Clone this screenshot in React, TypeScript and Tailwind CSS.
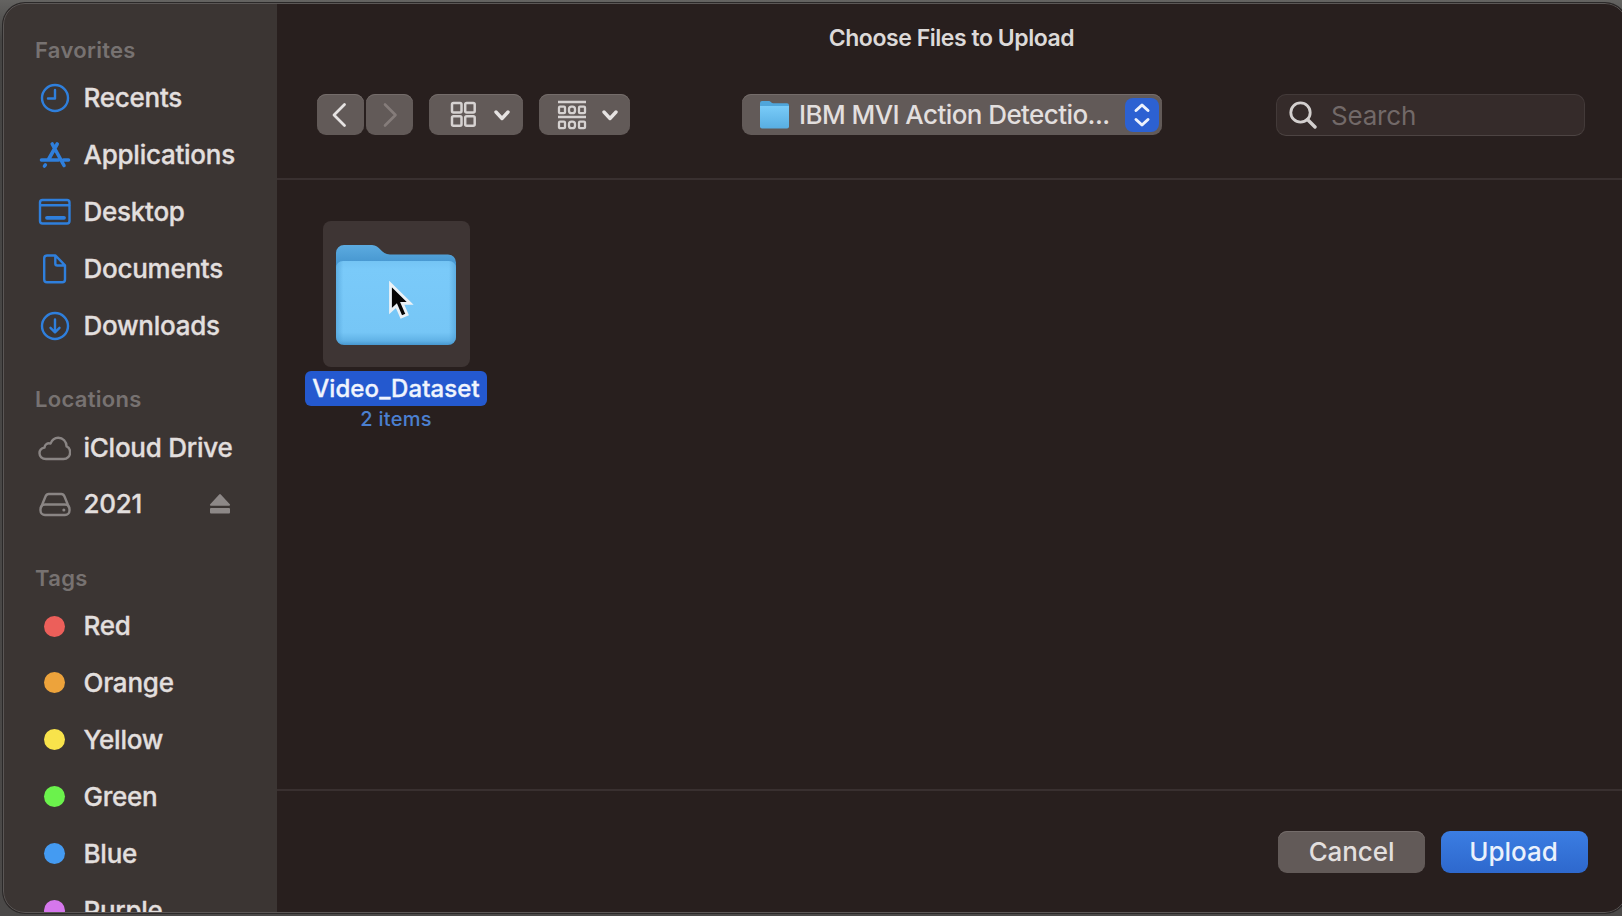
import React from "react";

const font = "font-['Inter',sans-serif]";

const rowText = "text-[26px] leading-none font-medium tracking-[-0.25px] text-[#e2dfde] [-webkit-text-stroke:0.35px_#e2dfde]";

function Section({ title, className = "", children }: { title: string; className?: string; children: React.ReactNode }) {
  return (
    <section className={className}>
      <h2 className="flex h-[39px] items-center pb-[1px] pl-[32px] text-[22px] leading-none font-semibold tracking-[0.3px] text-[#777271]">{title}</h2>
      <ul>{children}</ul>
    </section>
  );
}

function Row({ label, icon, trailing }: { label: string; icon: React.ReactNode; trailing?: React.ReactNode }) {
  return (
    <li className="flex h-[56.9px] items-center pl-[34px]">
      <span className="flex w-[34px] shrink-0 justify-center">{icon}</span>
      <span className={`ml-[12.5px] whitespace-nowrap ${rowText}`}>{label}</span>
      {trailing}
    </li>
  );
}

function SideIcon({ children, gray = false }: { children: React.ReactNode; gray?: boolean }) {
  return (
    <svg width="34" height="34" viewBox="0 0 34 34" fill="none" stroke={gray ? "#8a8584" : "#2f7fdc"} strokeWidth="2.4" strokeLinecap="round" strokeLinejoin="round">
      {children}
    </svg>
  );
}

function Dot({ color }: { color: string }) {
  return <span className={`h-[21px] w-[21px] rounded-full ${color}`} />;
}

function Chevron() {
  return (
    <svg width="16" height="11" viewBox="0 0 16 11" fill="none" stroke="#e6e3e2" strokeWidth="3.4" strokeLinecap="round" strokeLinejoin="round">
      <path d="M2 2l6 6.500L14 2" />
    </svg>
  );
}

const toolButton = "flex h-[41px] items-center rounded-[9px] bg-[#625a58] shadow-[inset_0_1px_0_#746c6a]";

export default function App() {
  return (
    <div className={`h-[916px] w-[1622px] overflow-hidden bg-linear-to-b from-[#646361] from-[0px] via-[#454443] via-[40px] to-[#4b4948] pt-[3px] pl-[3px] ${font}`}>
      <div className="relative flex h-[910px] w-[1624px] overflow-hidden rounded-[22px] bg-[#281f1e] shadow-[0_0_0_1px_#2b2929] after:pointer-events-none after:absolute after:inset-0 after:rounded-[22px] after:border after:border-[#5b5756] after:content-['']">
        <aside className="h-full w-[274px] shrink-0 overflow-hidden bg-[#3b3533] pt-[28px]">
          <Section title="Favorites">
            <Row label="Recents" icon={<SideIcon><circle cx="18" cy="17" r="13" /><path d="M18 9v8.500h-7" /></SideIcon>} />
            <Row label="Applications" icon={<SideIcon><path d="M15.200 6L27 27.500M20.200 6L11.500 21.500M4.500 22H21.500M26.500 22H31.500M8.300 27l-.8 1" strokeWidth="3.600" /></SideIcon>} />
            <Row label="Desktop" icon={<SideIcon><rect x="3" y="5" width="29.500" height="23.500" rx="2.500" /><path d="M4 10.200H32" /><path d="M10 22.800H27" strokeWidth="3.800" /></SideIcon>} />
            <Row label="Documents" icon={<SideIcon><path d="M10 3.500h8.500l9.500 9.800v14.200a2.800 2.800 0 0 1-2.800 2.800H10a2.800 2.800 0 0 1-2.800-2.800V6.300A2.800 2.800 0 0 1 10 3.500zM18.300 4v7.500a2 2 0 0 0 2 2H28" /></SideIcon>} />
            <Row label="Downloads" icon={<SideIcon><circle cx="18" cy="17" r="13" /><path d="M18 10.500v12.500M13.500 18.800l4.500 4.500 4.500-4.500" /></SideIcon>} />
          </Section>
          <Section title="Locations" className="mt-[25.7px]">
            <Row label="iCloud Drive" icon={<SideIcon gray><path d="M9 28C5 28 2.500 25.300 2.500 22.200c0-3 2.200-5.200 5-5.600.2-3.200 3.200-5 6-4C15 9 18 6.800 21.200 6.800c4.800 0 8.300 3.600 8.400 8.600 2.400 1 3.500 3.300 3.500 6 0 3.800-2.900 6.600-6.600 6.600z" /></SideIcon>} />
            <Row
              label="2021"
              icon={<SideIcon gray><path d="M4 20.500L8.600 9.300C9.200 7.800 10 7 11.700 7h12.600c1.700 0 2.500.8 3.100 2.300L32 20.500" /><rect x="3.500" y="17.500" width="29" height="10.500" rx="4.500" /><path d="M26.800 23h.1" strokeWidth="3" /></SideIcon>}
              trailing={
                <svg className="mr-[46px] ml-auto" width="22" height="22" viewBox="0 0 22 22" fill="#8d8887">
                  <path d="M10.200 1.600a1 1 0 0 1 1.600 0l9 9.700c.6.700.2 1.500-.7 1.500H1.900c-.9 0-1.300-.8-.7-1.500z" />
                  <rect x="1" y="15" width="20" height="5.500" rx="1" />
                </svg>
              }
            />
          </Section>
          <Section title="Tags" className="mt-[25.700px]">
            <Row label="Red" icon={<Dot color="bg-[#ec5f5a]" />} />
            <Row label="Orange" icon={<Dot color="bg-[#eda33b]" />} />
            <Row label="Yellow" icon={<Dot color="bg-[#f8e34b]" />} />
            <Row label="Green" icon={<Dot color="bg-[#6bf24c]" />} />
            <Row label="Blue" icon={<Dot color="bg-[#449bf2]" />} />
            <Row label="Purple" icon={<Dot color="bg-[#d577ed]" />} />
          </Section>
        </aside>

        <main className="flex w-[1345px] shrink-0 flex-col">
          <header className="h-[177px] shrink-0 border-b-2 border-[#393030]">
            <h1 className="flex h-[70px] items-center justify-center pl-[4px] text-[23px] leading-none font-semibold tracking-[-0.45px] text-[#dcd9d8]">Choose Files to Upload</h1>
            <div className="flex pt-[21px] pl-[40px]">
              <button className={`${toolButton} w-[47px] justify-center pr-[3px]`}>
                <svg width="16" height="26" viewBox="0 0 16 26" fill="none" stroke="#e6e3e2" strokeWidth="2.800" strokeLinecap="round" strokeLinejoin="round"><path d="M13.500 2.500L3 13l10.500 10.500" /></svg>
              </button>
              <button className={`${toolButton} ml-[2px] w-[47px] justify-center`}>
                <svg width="16" height="26" viewBox="0 0 16 26" fill="none" stroke="#857c7a" strokeWidth="2.600" strokeLinecap="round" strokeLinejoin="round"><path d="M3 2.500L13.500 13 3 23.500" /></svg>
              </button>
              <button className={`${toolButton} ml-[16px] w-[94px] pl-[21px]`}>
                <svg width="27" height="27" viewBox="0 0 27 27" fill="none" stroke="#d6d2d1" strokeWidth="2.500"><rect x="2" y="2" width="9.500" height="9.500" rx="1.500" /><rect x="15.200" y="2" width="9.500" height="9.500" rx="1.500" /><rect x="2" y="15.200" width="9.500" height="9.500" rx="1.500" /><rect x="15.200" y="15.200" width="9.500" height="9.500" rx="1.500" /></svg>
                <span className="ml-[17px] pt-[1px]"><Chevron /></span>
              </button>
              <button className={`${toolButton} ml-[16px] w-[91px] pl-[18px]`}>
                <svg width="30" height="30" viewBox="0 0 30 30" fill="none" stroke="#d6d2d1" strokeWidth="2.300"><path d="M1 2H29M1 17H29" strokeWidth="2.700" /><rect x="2" y="6.700" width="6" height="6.500" rx="1" /><rect x="12" y="6.700" width="6" height="6.500" rx="2.500" /><rect x="22" y="6.700" width="6" height="6.500" rx="1" /><rect x="2" y="21.700" width="6" height="6.500" rx="1" /><rect x="12" y="21.700" width="6" height="6.500" rx="2.500" /><rect x="22" y="21.700" width="6" height="6.500" rx="1" /></svg>
                <span className="ml-[15px] pt-[1px]"><Chevron /></span>
              </button>
              <button className={`${toolButton} ml-[112px] w-[420px] pr-[3px] pl-[17px]`}>
                <svg width="31" height="30" viewBox="0 0 31 30">
                  <defs><linearGradient id="small" x1="0" y1="0" x2="0" y2="1"><stop offset="0" stopColor="#79cbf8" /><stop offset="1" stopColor="#58aee2" /></linearGradient></defs>
                  <path d="M1 3a2 2 0 0 1 2-2h7c1.500 0 2 2.200 4 2.200h14a2 2 0 0 1 2 2V10H1z" fill="#4fa5da" />
                  <path d="M1 6h29v20.500a2 2 0 0 1-2 2H3a2 2 0 0 1-2-2z" fill="url(#small)" />
                </svg>
                <span className="ml-[9px] text-[26px] leading-none font-medium tracking-[-0.58px] whitespace-nowrap text-[#e2dfde]">IBM MVI Action Detectio...</span>
                <span className="ml-auto flex h-[34px] w-[34px] items-center justify-center rounded-[8px] bg-[#2c61d2]">
                  <svg width="18" height="26" viewBox="0 0 18 26" fill="none" stroke="#edf2fc" strokeWidth="3" strokeLinecap="round" strokeLinejoin="round"><path d="M3 8.500L9 3l6 5.500M3 17.500L9 23l6-5.500" /></svg>
                </span>
              </button>
              <div className="ml-[114px] flex h-[42px] w-[309px] items-center rounded-[10px] border border-[#433a39] border-b-[#4d4443] bg-[#352b2a] pl-[12px]">
                <svg width="28" height="28" viewBox="0 0 28 28" fill="none" stroke="#d3cfce" strokeWidth="2.800" strokeLinecap="round"><circle cx="11.500" cy="11.500" r="9.700" /><path d="M18.500 18.500l7.500 7.500" strokeWidth="3.400" /></svg>
                <span className="ml-[14px] pt-[1px] text-[26px] leading-none tracking-[-0.2px] text-[#726968]">Search</span>
              </div>
            </div>
          </header>

          <div className="flex-1 pt-[41px] pl-[28px]">
            <div className="flex w-[182px] flex-col items-center">
              <div className="relative flex h-[146px] w-[147px] items-center justify-center rounded-[8px] bg-[#3e3534]">
                <svg width="123" height="104" viewBox="0 0 123 104" className="mt-[2px]">
                  <defs>
                    <linearGradient id="back" x1="0" y1="0" x2="0" y2="1"><stop offset="0" stopColor="#5cabe0" /><stop offset="1" stopColor="#3485c2" /></linearGradient>
                    <linearGradient id="front" x1="0" y1="0" x2="0" y2="1"><stop offset="0" stopColor="#74c4f4" /><stop offset=".1" stopColor="#7acaf9" /><stop offset=".85" stopColor="#76c6f6" /><stop offset=".95" stopColor="#61b2e6" /><stop offset="1" stopColor="#4797cf" /></linearGradient>
                    <linearGradient id="sides" x1="0" y1="0" x2="1" y2="0"><stop offset="0" stopColor="#4a9cd4" stopOpacity=".6" /><stop offset=".06" stopColor="#4a9cd4" stopOpacity="0" /><stop offset=".94" stopColor="#4a9cd4" stopOpacity="0" /><stop offset="1" stopColor="#4a9cd4" stopOpacity=".6" /></linearGradient>
                  </defs>
                  <path d="M1 10a8 8 0 0 1 8-8h28c8 0 9 9.500 18 9.500h58a8 8 0 0 1 8 8V36H1z" fill="url(#back)" />
                  <path d="M1 25a7 7 0 0 1 7-7h106a7 7 0 0 1 7 7v69a8 8 0 0 1-8 8H9a8 8 0 0 1-8-8z" fill="url(#front)" />
                  <path d="M1 25a7 7 0 0 1 7-7h106a7 7 0 0 1 7 7v69a8 8 0 0 1-8 8H9a8 8 0 0 1-8-8z" fill="url(#sides)" />
                </svg>
                <svg className="absolute top-[60px] left-[65px]" width="26" height="40" viewBox="0 0 26 40">
                  <path d="M2.500 3v27l5.900-5.300 4.900 11.300 5.800-2.400-4.900-11.200h8z" fill="#050505" stroke="#eaf1f6" strokeWidth="2.800" strokeLinejoin="miter" />
                </svg>
              </div>
              <div className="mt-[4px] flex h-[35px] w-[182px] items-center justify-center rounded-[6px] bg-[#2459cf] text-[24px] leading-none font-medium tracking-[0.08px] whitespace-nowrap text-[#f0f4fd] [-webkit-text-stroke:0.35px_#f0f4fd]">Video_Dataset</div>
              <div className="mt-[1px] text-[20px] leading-[24px] font-medium tracking-[0.25px] text-[#4b7fd0]">2 items</div>
            </div>
          </div>

          <footer className="flex h-[124px] shrink-0 items-start justify-end border-t-2 border-[#393030] pt-[40px] pr-[34px]">
            <button className="h-[42px] w-[147px] rounded-[9px] bg-[#625a58] text-[26px] leading-none font-medium tracking-[-0.1px] text-[#e2dfde] shadow-[inset_0_1px_0_#746c6a]">Cancel</button>
            <button className="ml-[16px] h-[42px] w-[147px] rounded-[9px] bg-linear-to-b from-[#3b7de2] to-[#2e68cd] pr-[2px] text-[26px] leading-none font-medium text-[#eaf1fc]">Upload</button>
          </footer>
        </main>
      </div>
    </div>
  );
}
